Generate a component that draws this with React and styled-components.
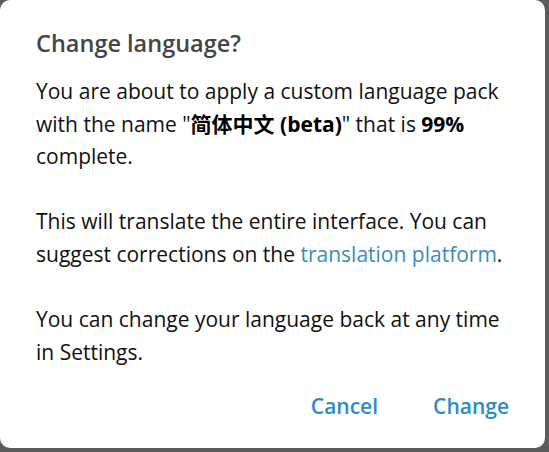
import React from "react";
import styled, { createGlobalStyle } from "styled-components";

const Global = createGlobalStyle`
  html, body {
    margin: 0;
    padding: 0;
    background: #5b5b5b;
    font-family: "Open Sans", "Noto Sans CJK SC", sans-serif;
  }
`;

const Dialog = styled.div`
  width: 545px;
  height: 448px;
  box-sizing: border-box;
  background: #fff;
  border-radius: 10px;
  padding: 27px 36px 0 36px;
  display: flex;
  flex-direction: column;
`;

const Title = styled.h2`
  margin: 0;
  font-size: 23.5px;
  font-weight: 600;
  color: #454545;
  line-height: 32px;
`;

const Body = styled.div`
  margin-top: 16px;
  font-size: 21px;
  line-height: 32.6px;
  color: #111;
`;

const Para = styled.p`
  margin: 0 0 32.6px 0;
  &:last-child {
    margin-bottom: 0;
  }
`;

const Strong = styled.b`
  font-weight: 700;
  color: #000;
`;

const Link = styled.a`
  color: #3a8dc0;
  text-decoration: none;
`;

const Actions = styled.div`
  display: flex;
  justify-content: flex-end;
  gap: 55px;
  margin-top: 24px;
  line-height: 29px;
`;

const ActionButton = styled.button`
  background: none;
  border: none;
  padding: 0;
  font-family: inherit;
  font-size: 21px;
  line-height: 29px;
  font-weight: 600;
  color: #2e8bc6;
  cursor: pointer;
`;

export default function App() {
  return (
    <>
      <Global />
      <Dialog>
        <Title>Change language?</Title>
        <Body>
          <Para>
            You are about to apply a custom language pack with the name "
            <Strong>简体中文 (beta)</Strong>" that is <Strong>99%</Strong>{" "}
            complete.
          </Para>
          <Para>
            This will translate the entire interface. You can suggest
            corrections on the <Link href="#">translation platform</Link>.
          </Para>
          <Para>
            You can change your language back at any time in Settings.
          </Para>
        </Body>
        <Actions>
          <ActionButton>Cancel</ActionButton>
          <ActionButton>Change</ActionButton>
        </Actions>
      </Dialog>
    </>
  );
}
